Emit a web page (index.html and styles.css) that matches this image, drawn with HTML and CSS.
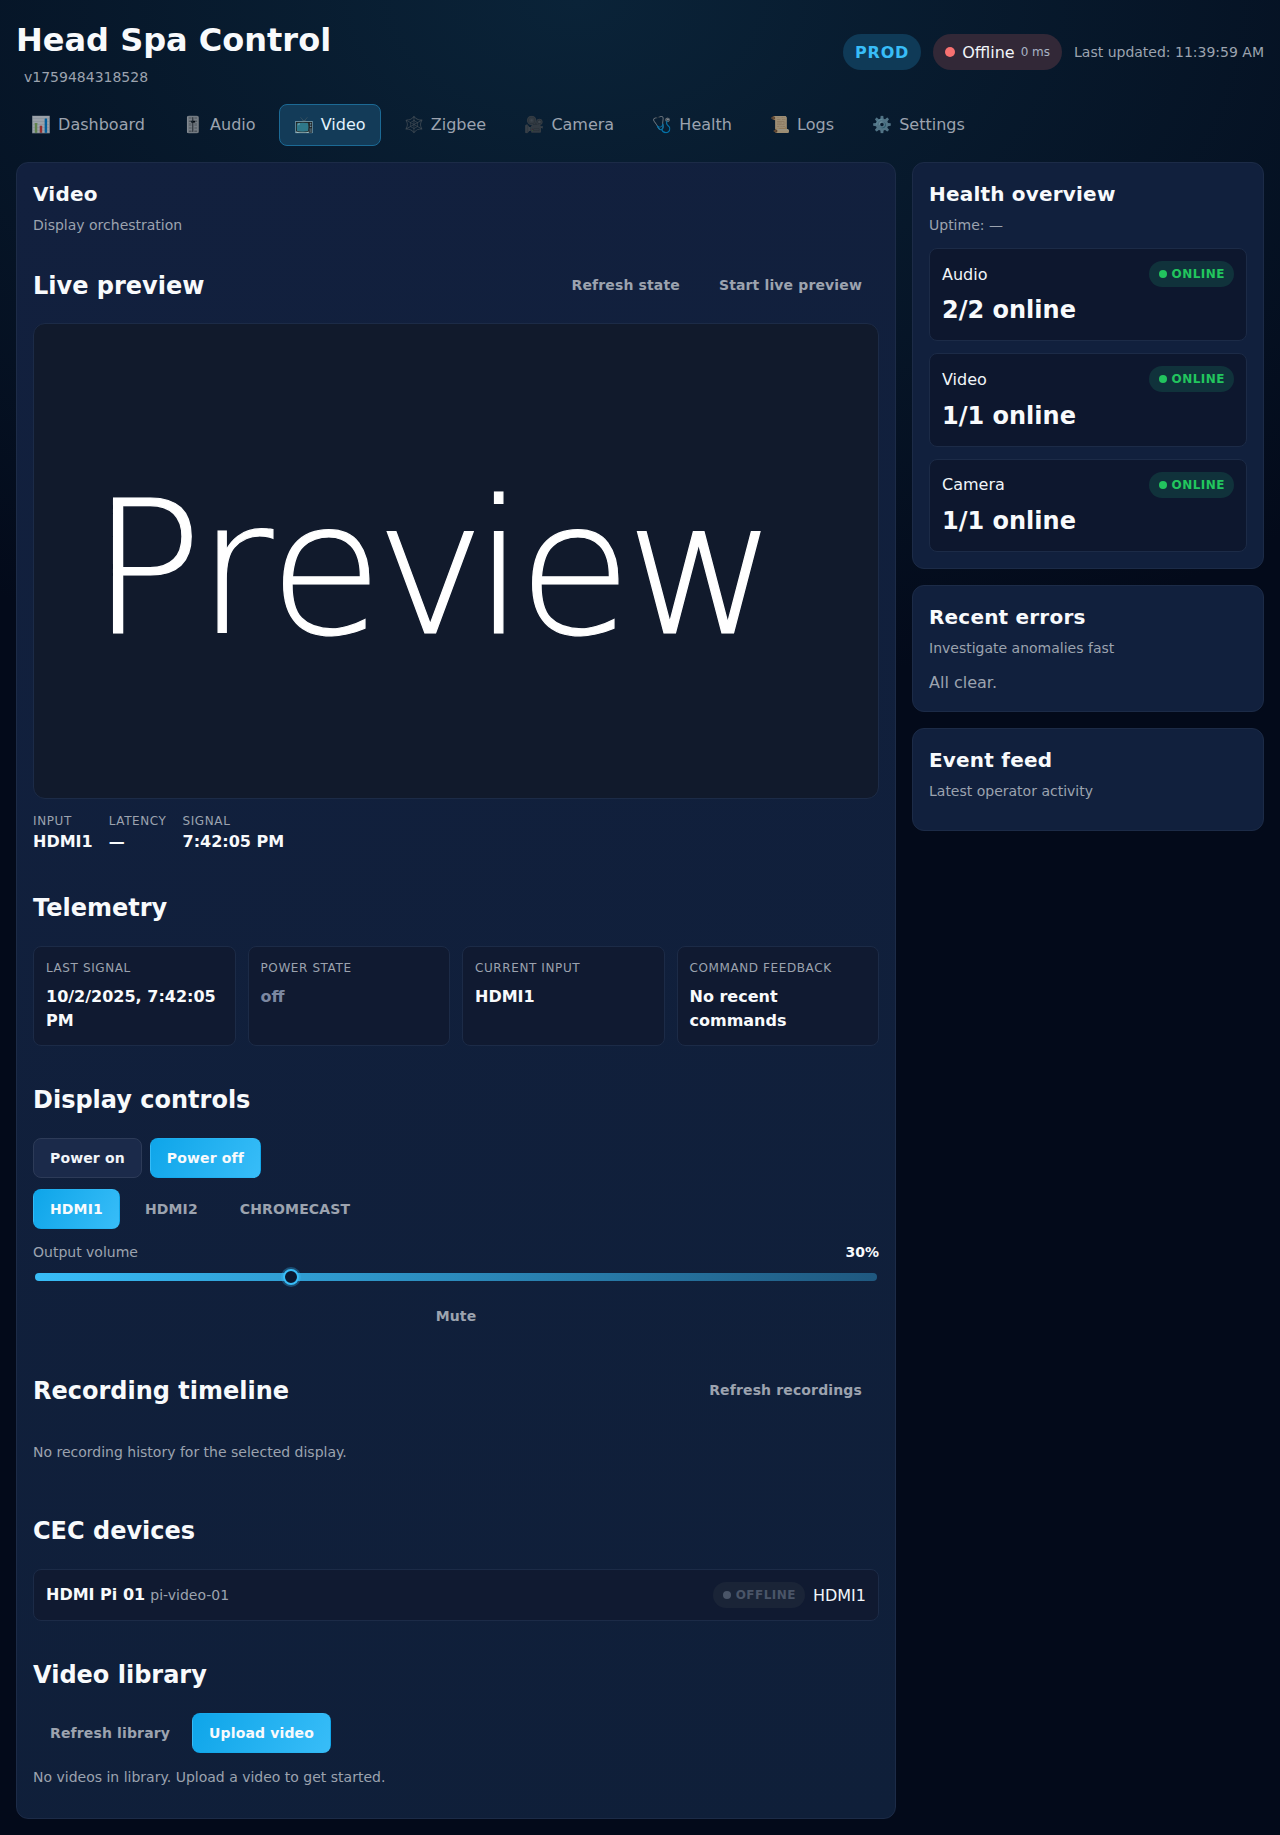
FILE: index.html
```html
<!DOCTYPE html>
<html lang="en">
<head>
  <meta charset="UTF-8" />
  <meta name="viewport" content="width=device-width, initial-scale=1.0"/>
  <title>Head Spa Control</title>
  <link rel="stylesheet" href="styles.css">
</head>
<body>
  <header class="topbar">
    <div class="brand">
      <h1>Head Spa Control</h1>
      <span class="version">v1759484318528</span>
    </div>
    <div class="status-row">
      <span class="env-pill">PROD</span>
      <span class="conn-pill"><i class="conn-dot"></i>Offline <small>0 ms</small></span>
      <span class="updated">Last updated: 11:39:59 AM</span>
    </div>
  </header>

  <nav class="tabs">
    <a class="tab"><span>📊</span>Dashboard</a>
    <a class="tab"><span>🎚️</span>Audio</a>
    <a class="tab active"><span>📺</span>Video</a>
    <a class="tab"><span>🕸️</span>Zigbee</a>
    <a class="tab"><span>🎥</span>Camera</a>
    <a class="tab"><span>🩺</span>Health</a>
    <a class="tab"><span>📜</span>Logs</a>
    <a class="tab"><span>⚙️</span>Settings</a>
  </nav>

  <div class="layout">
    <main class="card main-card">
      <h2>Video</h2>
      <p class="muted">Display orchestration</p>

      <section class="section first">
        <div class="section-head">
          <h3>Live preview</h3>
          <div class="btn-row tight">
            <button class="btn ghost">Refresh state</button>
            <button class="btn ghost">Start live preview</button>
          </div>
        </div>
        <div class="preview">
          <svg class="preview-art" viewBox="0 0 844 474">
            <text x="57" y="309" dx="0 4 6 -1 -5 -1 0" textLength="686" lengthAdjust="spacing">Preview</text>
          </svg>
        </div>
        <div class="meta-row">
          <div><label>INPUT</label><b>HDMI1</b></div>
          <div><label>LATENCY</label><b>—</b></div>
          <div><label>SIGNAL</label><b>7:42:05 PM</b></div>
        </div>
      </section>

      <section class="section">
        <h3>Telemetry</h3>
        <div class="telemetry">
          <div class="tile"><label>LAST SIGNAL</label><b>10/2/2025, 7:42:05 PM</b></div>
          <div class="tile"><label>POWER STATE</label><b class="dim">off</b></div>
          <div class="tile"><label>CURRENT INPUT</label><b>HDMI1</b></div>
          <div class="tile"><label>COMMAND FEEDBACK</label><b>No recent commands</b></div>
        </div>
      </section>

      <section class="section">
        <h3>Display controls</h3>
        <div class="btn-row controls">
          <button class="btn outline">Power on</button>
          <button class="btn primary">Power off</button>
        </div>
        <div class="btn-row inputs">
          <button class="btn primary">HDMI1</button>
          <button class="btn ghost">HDMI2</button>
          <button class="btn ghost">CHROMECAST</button>
        </div>
        <div class="volume-head"><span>Output volume</span><b>30%</b></div>
        <div class="slider"><i class="thumb"></i></div>
        <button class="btn ghost mute">Mute</button>
      </section>

      <section class="section recording">
        <div class="section-head">
          <h3>Recording timeline</h3>
          <button class="btn ghost">Refresh recordings</button>
        </div>
        <p class="muted empty">No recording history for the selected display.</p>
      </section>

      <section class="section">
        <h3>CEC devices</h3>
        <div class="device">
          <div><b>HDMI Pi 01</b> <span class="muted">pi-video-01</span></div>
          <div class="device-right"><span class="badge off"><i></i>OFFLINE</span>HDMI1</div>
        </div>
      </section>

      <section class="section library">
        <h3>Video library</h3>
        <div class="btn-row controls tight">
          <button class="btn ghost">Refresh library</button>
          <button class="btn primary">Upload video</button>
        </div>
        <p class="muted library-note">No videos in library. Upload a video to get started.</p>
      </section>
    </main>

    <aside class="side">
      <div class="card">
        <h2>Health overview</h2>
        <p class="muted">Uptime: —</p>
        <div class="health-list">
          <div class="health-item">
            <div class="health-top"><span>Audio</span><span class="badge on"><i></i>ONLINE</span></div>
            <strong>2/2 online</strong>
          </div>
          <div class="health-item">
            <div class="health-top"><span>Video</span><span class="badge on"><i></i>ONLINE</span></div>
            <strong>1/1 online</strong>
          </div>
          <div class="health-item">
            <div class="health-top"><span>Camera</span><span class="badge on"><i></i>ONLINE</span></div>
            <strong>1/1 online</strong>
          </div>
        </div>
      </div>
      <div class="card">
        <h2>Recent errors</h2>
        <p class="muted">Investigate anomalies fast</p>
        <p class="clear">All clear.</p>
      </div>
      <div class="card">
        <h2>Event feed</h2>
        <p class="muted">Latest operator activity</p>
        <div class="feed"></div>
      </div>
    </aside>
  </div>
</body>
</html>
```

FILE: styles.css
```css
* {
  box-sizing: border-box;
}
body {
  margin: 0;
  padding: 16px;
  min-height: 1835px;
  font-family: 'DejaVu Sans', sans-serif;
  font-size: 16px;
  color: #f1f5f9;
  background: radial-gradient(1100px 700px at 45% 0, #0a2338 0%, rgba(10,35,56,0) 100%), #030a1a;
  background-repeat: no-repeat;
}
h1, h2, h3, p {
  margin: 0;
}
.topbar {
  display: flex;
  justify-content: space-between;
  align-items: center;
  height: 72px;
}
.brand h1 {
  font-size: 32px;
  line-height: 46px;
  color: #f8fafc;
}
.version {
  display: block;
  margin: 4px 0 0 8px;
  font-size: 14px;
  line-height: 21px;
  color: #9ca3af;
}
.status-row {
  display: flex;
  align-items: center;
  gap: 12px;
  font-size: 14px;
}
.env-pill {
  padding: 9px 12px;
  height: 36px;
  border-radius: 18px;
  background: #0f3a57;
  color: #38bdf8;
  font-weight: 700;
  font-size: 16px;
  letter-spacing: 0.05em;
}
.conn-pill {
  display: flex;
  align-items: center;
  height: 36px;
  padding: 0 12px;
  border-radius: 18px;
  background: #322837;
  font-size: 16px;
}
.conn-pill small {
  margin-left: 6px;
  font-size: 12px;
  color: #a8b3c4;
}
.conn-dot {
  width: 10px;
  height: 10px;
  margin-right: 7px;
  border-radius: 50%;
  background: #f87171;
}
.updated {
  color: #9ca3af;
}

.tabs {
  display: flex;
  gap: 8px;
  margin-top: 16px;
}
.tab {
  display: flex;
  align-items: center;
  gap: 7px;
  height: 42px;
  padding: 0 14.1px 1px;
  border: 1px solid transparent;
  border-radius: 8px;
  color: #9ca3af;
}
.tab span {
  opacity: 0.6;
}
.tab.active {
  background: #133b58;
  border-color: #1c6a95;
  color: #e2f2fc;
}
.tab.active span {
  opacity: 1;
}

.layout {
  display: grid;
  grid-template-columns: 880px 352px;
  gap: 16px;
  margin-top: 16px;
  align-items: start;
}
.side {
  display: flex;
  flex-direction: column;
  gap: 16px;
}
.card {
  padding: 16px;
  border: 1px solid #1c2b47;
  border-radius: 12px;
  background: #11203d;
}
.main-card {
  background: linear-gradient(160deg, #12203e, #0f1f39);
}
h2 {
  font-size: 20px;
  line-height: 30px;
  letter-spacing: 0.01em;
  color: #f8fafc;
}
h3 {
  padding-top: 2px;
  font-size: 24px;
  line-height: 34px;
  color: #f8fafc;
}
.muted {
  font-size: 14px;
  line-height: 21px;
  color: #9ca3af;
}
.card > .muted {
  margin-top: 6px;
}
.section {
  margin-top: 35px;
}
.section.first {
  margin-top: 31px;
}
.section.recording {
  margin-top: 36px;
}
.section-head {
  display: flex;
  justify-content: space-between;
  align-items: center;
  height: 36px;
}
.btn-row {
  display: flex;
  gap: 8px;
}
.btn-row.tight {
  gap: 5px;
}
.controls {
  margin-top: 21px;
}
.inputs {
  margin-top: 11px;
}
.btn {
  height: 40px;
  padding: 0 16px;
  border: 1px solid transparent;
  border-radius: 8px;
  background: transparent;
  font-family: inherit;
  font-size: 14px;
  font-weight: 700;
  letter-spacing: 0.01em;
  color: #9ca3af;
}
.btn.outline {
  background: #1b2a4a;
  border-color: #2d3b58;
  color: #f1f5f9;
}
.btn.primary {
  background: linear-gradient(120deg, #0ea5e9, #38bdf8);
  color: #f8fafc;
}
.btn.mute {
  display: block;
  width: 100%;
  margin-top: 15px;
}

.preview {
  height: 476px;
  margin-top: 20px;
  border: 1px solid #1c2b47;
  border-radius: 12px;
  background: #111a2c;
  overflow: hidden;
}
.preview-art {
  display: block;
  width: 100%;
  height: 100%;
}
.preview-art text {
  font-family: 'DejaVu Sans', sans-serif;
  font-weight: 200;
  font-size: 185px;
  fill: #fff;
  stroke: #fff;
  stroke-width: 1.2px;
}
.meta-row {
  display: flex;
  gap: 16px;
  margin-top: 13px;
}
label {
  display: block;
  font-size: 12px;
  line-height: 18px;
  letter-spacing: 0.05em;
  color: #9ca3af;
}
.meta-row b {
  display: block;
  line-height: 24px;
  color: #f8fafc;
}

.telemetry {
  display: grid;
  grid-template-columns: repeat(4, 1fr);
  gap: 12px;
  margin-top: 21px;
}
.tile {
  padding: 12px;
  border: 1px solid #1c2b47;
  border-radius: 8px;
  background: #101a31;
}
.tile b {
  display: block;
  margin-top: 8px;
  line-height: 24px;
  color: #f8fafc;
}
.tile b.dim {
  color: #7c88a1;
}

.volume-head {
  display: flex;
  justify-content: space-between;
  margin-top: 13px;
  font-size: 14px;
  line-height: 21px;
  color: #9ca3af;
}
.volume-head b {
  color: #f8fafc;
}
.slider {
  position: relative;
  height: 8px;
  margin: 10px 2px 0;
  border-radius: 4px;
  background: linear-gradient(90deg, #38bdf8, #1f587f);
}
.thumb {
  position: absolute;
  top: -4px;
  left: calc(30% - 4.8px);
  width: 16px;
  height: 16px;
  border: 2px solid #38bdf8;
  border-radius: 50%;
  background: #0a1830;
  box-shadow: 0 0 0 2px rgba(56, 189, 248, 0.3);
}
.empty {
  margin: 34px 0 49px;
}
.library-note {
  margin: 14px 0 14px;
}

.device {
  display: flex;
  justify-content: space-between;
  align-items: center;
  height: 52px;
  margin-top: 21px;
  padding: 0 12px;
  border: 1px solid #1c2b47;
  border-radius: 8px;
  background: #101a31;
}
.device b {
  color: #f8fafc;
}
.device-right {
  display: flex;
  align-items: center;
  gap: 8px;
}
.badge {
  display: inline-flex;
  align-items: center;
  gap: 5px;
  height: 26px;
  padding: 0 9px 0 10px;
  border-radius: 13px;
  font-size: 12px;
  font-weight: 700;
  letter-spacing: 0.04em;
}
.badge i {
  width: 8px;
  height: 8px;
  border-radius: 50%;
  background: currentColor;
}
.badge.on {
  background: #10323b;
  color: #22c55e;
}
.badge.off {
  background: #1a2437;
  color: #4a5568;
}

.health-list {
  display: flex;
  flex-direction: column;
  gap: 12px;
  margin-top: 12px;
}
.health-item {
  padding: 12px;
  border: 1px solid #1c2b47;
  border-radius: 8px;
  background: #0d172e;
}
.health-top {
  display: flex;
  justify-content: space-between;
  align-items: center;
}
.health-item strong {
  display: block;
  margin-top: 5.33px;
  font-size: 24px;
  line-height: 36px;
  color: #f8fafc;
}
.clear {
  margin-top: 11px;
  line-height: 25px;
  color: #9ca3af;
}
.feed {
  margin-top: 12px;
}
```
